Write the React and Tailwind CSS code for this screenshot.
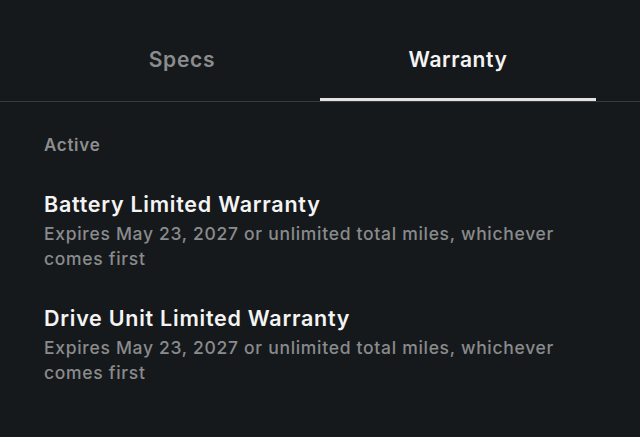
export default function App() {
  const items = [
    { title: "Battery Limited Warranty", body: "Expires May 23, 2027 or unlimited total miles, whichever comes first" },
    { title: "Drive Unit Limited Warranty", body: "Expires May 23, 2027 or unlimited total miles, whichever comes first" },
  ];
  return (
    <div className="w-full h-[437px] bg-[#16191b] overflow-hidden" style={{ fontFamily: "Inter, 'Noto Sans', sans-serif" }}>
      <div className="flex px-[44px] border-b border-[#383b3d]">
        <div className="flex-1 h-[101px] pt-[47px] text-center text-[21px] leading-[26px] font-semibold tracking-[0.7px] text-[#8a8c8e]">Specs</div>
        <div className="flex-1 h-[101px] pt-[47px] text-center text-[21px] leading-[26px] font-semibold tracking-[0.6px] text-[#f4f4f4] border-b-[3px] border-[#e2e2e2]">Warranty</div>
      </div>
      <div className="px-[44px] pt-[31px] flex flex-col gap-[34px]">
        <div className="text-[17px] leading-[24px] font-semibold tracking-[0.7px] text-[#8c8e90]">Active</div>
        {items.map((it) => (
          <div key={it.title} className="flex flex-col gap-[4px]">
            <div className="text-[21.5px] leading-[26px] font-semibold tracking-[0.75px] text-[#f4f4f4]">{it.title}</div>
            <div className="text-[17.5px] leading-[25px] font-medium tracking-[0.7px] text-[#898b8d] pr-[20px]">{it.body}</div>
          </div>
        ))}
      </div>
    </div>
  );
}
